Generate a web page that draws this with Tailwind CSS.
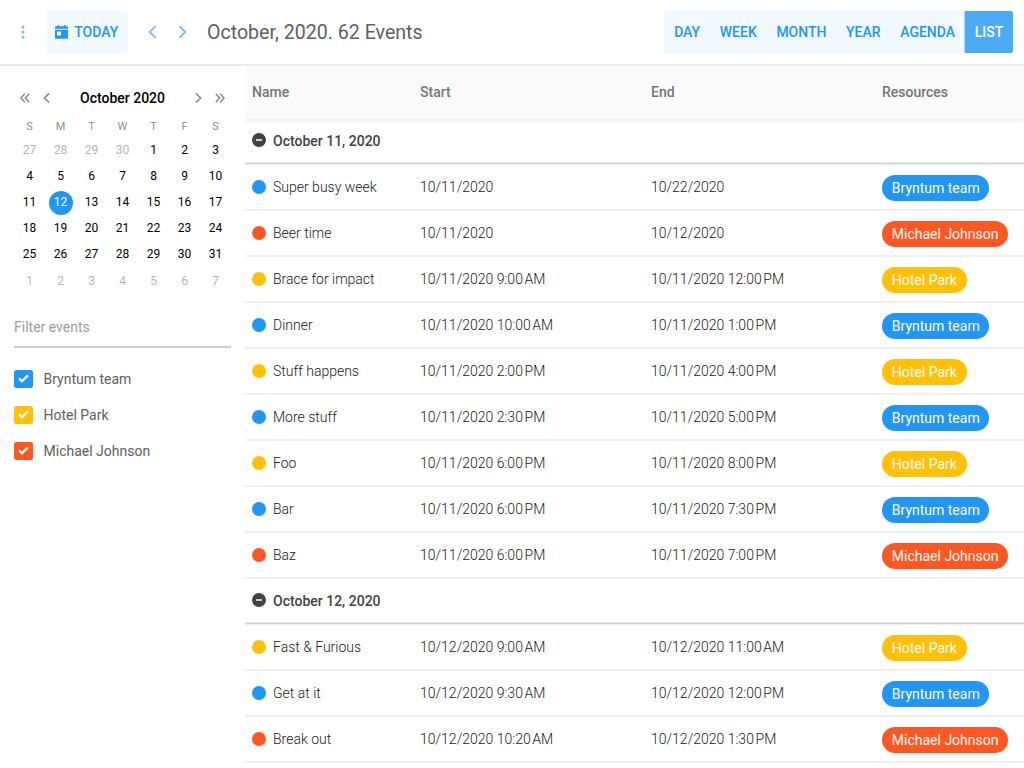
<!DOCTYPE html>
<html lang="en">
<head>
<meta charset="utf-8">
<title>Calendar</title>
<script src="https://cdn.jsdelivr.net/npm/@tailwindcss/browser@4"></script>
</head>
<body class="w-[1024px] h-[768px] overflow-hidden bg-white font-['Roboto',sans-serif] text-sm text-[#606060] flex flex-col">
<header class="h-[66px] shrink-0 border-b-2 border-[#ebebeb] flex items-center pl-[13px] pr-[11px]">
  <button class="w-5 h-10 flex items-center justify-center" aria-label="Menu">
    <svg width="4" height="14" viewBox="0 0 4 14" fill="#74bbf8"><circle cx="2" cy="2.1" r="1.5"/><circle cx="2" cy="7" r="1.5"/><circle cx="2" cy="11.9" r="1.5"/></svg>
  </button>
  <button class="ml-[12.6px] w-[82.4px] h-[42px] rounded-xs bg-[#f1f8fe] text-[#2196f3] font-medium flex items-center pl-[9px]">
    <svg width="13" height="14" viewBox="0 0 13 14"><path fill="#2196f3" fill-rule="evenodd" d="M2.6 0h1.5v1.2h4.8V0h1.5v1.2h1.2c.8 0 1.4.5 1.4 1.3v1.2H0V2.500C0 1.700.6 1.200 1.400 1.200h1.200zM0 4.700h13v7.800c0 .8-.6 1.300-1.400 1.300H1.400c-.8 0-1.400-.5-1.400-1.300zM2 6.600v4h4v-4z"/></svg>
    <span class="ml-[6.6px]">TODAY</span>
  </button>
  <button class="ml-[20px] w-[9px]" aria-label="Previous"><svg width="9" height="14" viewBox="0 0 9 14" fill="none" stroke="#6cb7f7" stroke-width="1.7"><path d="M7.600 1.200 1.800 7l5.800 5.800"/></svg></button>
  <button class="ml-[21px] w-[9px]" aria-label="Next"><svg width="9" height="14" viewBox="0 0 9 14" fill="none" stroke="#6cb7f7" stroke-width="1.7"><path d="M1.400 1.200 7.200 7l-5.800 5.800"/></svg></button>
  <h1 class="ml-5 pt-px text-[19.6px] leading-[25px]">October, 2020. 62 Events</h1>
  <nav class="ml-auto h-[42px] rounded-xs overflow-hidden bg-[#f1f8fe] text-[#2196f3] font-medium flex">
    <button class="px-[9.8px]">DAY</button>
    <button class="px-[9.8px]">WEEK</button>
    <button class="px-[9.8px]">MONTH</button>
    <button class="px-[9.8px]">YEAR</button>
    <button class="pl-[9.8px] pr-[9.3px]">AGENDA</button>
    <button class="pl-[9.3px] pr-[9.8px] border-l border-[#a6d5fa] bg-[#4dabf5] text-white">LIST</button>
  </nav>
</header>
<main class="flex flex-1 min-h-0">
  <aside class="w-[245px] shrink-0 pl-[14px] pr-[14px] pt-[20px]">
    <div class="h-6 flex items-center text-black font-medium">
      <svg class="ml-[6px]" width="10" height="10" viewBox="0 0 10 10" fill="none" stroke="#808080" stroke-width="1.3"><path d="M4.800.8.900 5l3.900 4.200M9.200.8 5.300 5l3.900 4.200"/></svg>
      <svg class="ml-[13px]" width="7" height="10" viewBox="0 0 7 10" fill="none" stroke="#808080" stroke-width="1.400"><path d="M6.100.4 1.300 5l4.800 4.600"/></svg>
      <span class="flex-1 text-center">October 2020</span>
      <svg width="7" height="10" viewBox="0 0 7 10" fill="none" stroke="#808080" stroke-width="1.400"><path d="M.9.400 5.700 5 .9 9.600"/></svg>
      <svg class="ml-[13px] mr-[6px]" width="10" height="10" viewBox="0 0 10 10" fill="none" stroke="#808080" stroke-width="1.300"><path d="M.8.800 4.700 5 .8 9.200M5.200.800 9.100 5 5.200 9.200"/></svg>
    </div>
    <div class="mt-[9px] grid grid-cols-7 h-4 leading-4 text-center text-[11px] text-[#909090]"><span>S</span><span>M</span><span>T</span><span>W</span><span>T</span><span>F</span><span>S</span></div>
    <div id="days" class="mt-[2.2px] grid grid-cols-7 auto-rows-[26.2px] text-[12px] text-black"></div>
    <div class="mt-[10.600px] h-[42.600px] border-b-2 border-[#cccccc] pt-[12px] text-[#9e9e9e] leading-[20px]">Filter events</div>
    <div class="mt-[13.400px] flex flex-col" id="filters"></div>
  </aside>
  <section class="flex-1 min-w-0 flex flex-col overflow-hidden text-[#212121]">
    <div class="relative h-[53px] shrink-0 bg-[#fafafa] shadow-[0_2px_4px_rgba(0,0,0,0.08)] grid grid-cols-[168px_231px_231px_1fr] pl-[7px] pt-[16px] leading-[20px] font-medium text-[#757575]">
      <span>Name</span><span>Start</span><span>End</span><span>Resources</span>
    </div>
    <div id="rows"></div>
  </section>
</main>
<script>
const days = [27,28,29,30, ...Array.from({length:31},(_,i)=>i+1), 1,2,3,4,5,6,7];
document.getElementById('days').innerHTML = days.map((d,i)=>{
  const other = i<4 || i>34;
  const today = i===15;
  return `<span class="flex items-center justify-center ${other?'text-[#b5b5b5]':''}">${today?`<b class="size-6 rounded-full bg-[#2196f3] text-white font-normal flex items-center justify-center">${d}</b>`:d}</span>`;
}).join('');
const team = {
  B:['Bryntum team','bg-[#2196f3]'],
  H:['Hotel Park','bg-[#ffc107]'],
  M:['Michael Johnson','bg-[#ff5722]']
};
document.getElementById('filters').innerHTML = Object.values(team).map(([n,c])=>`<label class="h-9 flex items-center"><span class="size-[18.500px] mr-[11px] rounded-[2.500px] ${c} flex items-center justify-center"><svg width="11" height="9" viewBox="0 0 11 9" fill="none" stroke="#fff" stroke-width="2.200"><path d="M1 4.400 4 7.300 10 1.400"/></svg></span>${n}</label>`).join('');
const a='10/11/2020', b='10/12/2020';
const rows = [
  'October 11, 2020',
  ['Super busy week',a,'10/22/2020','B'],
  ['Beer time',a,b,'M'],
  ['Brace for impact',a+' 9:00 AM',a+' 12:00 PM','H'],
  ['Dinner',a+' 10:00 AM',a+' 1:00 PM','B'],
  ['Stuff happens',a+' 2:00 PM',a+' 4:00 PM','H'],
  ['More stuff',a+' 2:30 PM',a+' 5:00 PM','B'],
  ['Foo',a+' 6:00 PM',a+' 8:00 PM','H'],
  ['Bar',a+' 6:00 PM',a+' 7:30 PM','B'],
  ['Baz',a+' 6:00 PM',a+' 7:00 PM','M'],
  'October 12, 2020',
  ['Fast &amp; Furious',b+' 9:00 AM',b+' 11:00 AM','H'],
  ['Get at it',b+' 9:30 AM',b+' 12:00 PM','B'],
  ['Break out',b+' 10:20 AM',b+' 1:30 PM','M']
];
const time = s => s.replace(/ (AM|PM)$/, '<span class="ml-[1.700px]">$1</span>');
document.getElementById('rows').innerHTML = rows.map(r => typeof r === 'string'
  ? `<div class="h-[46px] flex flex-col"><div class="h-[43px] shrink-0 flex items-center pl-[7px] font-medium text-[#424242]"><svg class="mr-[7px] -mt-px" width="14" height="14" viewBox="0 0 14 14"><circle cx="7" cy="7" r="7" fill="#424242"/><path d="M4 7h6" stroke="#fff" stroke-width="1.500"/></svg>${r}</div><div class="h-[3px] shrink-0 border-y border-[#ececec] bg-[#d0d0d0]"></div></div>`
  : `<div class="h-[46px] border-b-2 border-[#efefef] grid grid-cols-[168px_231px_231px_1fr] items-center pl-[7px] font-light"><span class="flex items-center"><i class="size-[14px] mr-[7px] rounded-full ${team[r[3]][1]}"></i>${r[0]}</span><span>${time(r[1])}</span><span>${time(r[2])}</span><span class="mt-[2px] h-[25.400px] leading-[26.600px] w-fit rounded-full px-[9.800px] text-white font-normal ${team[r[3]][1]}">${team[r[3]][0]}</span></div>`).join('');
</script>
</body>
</html>
